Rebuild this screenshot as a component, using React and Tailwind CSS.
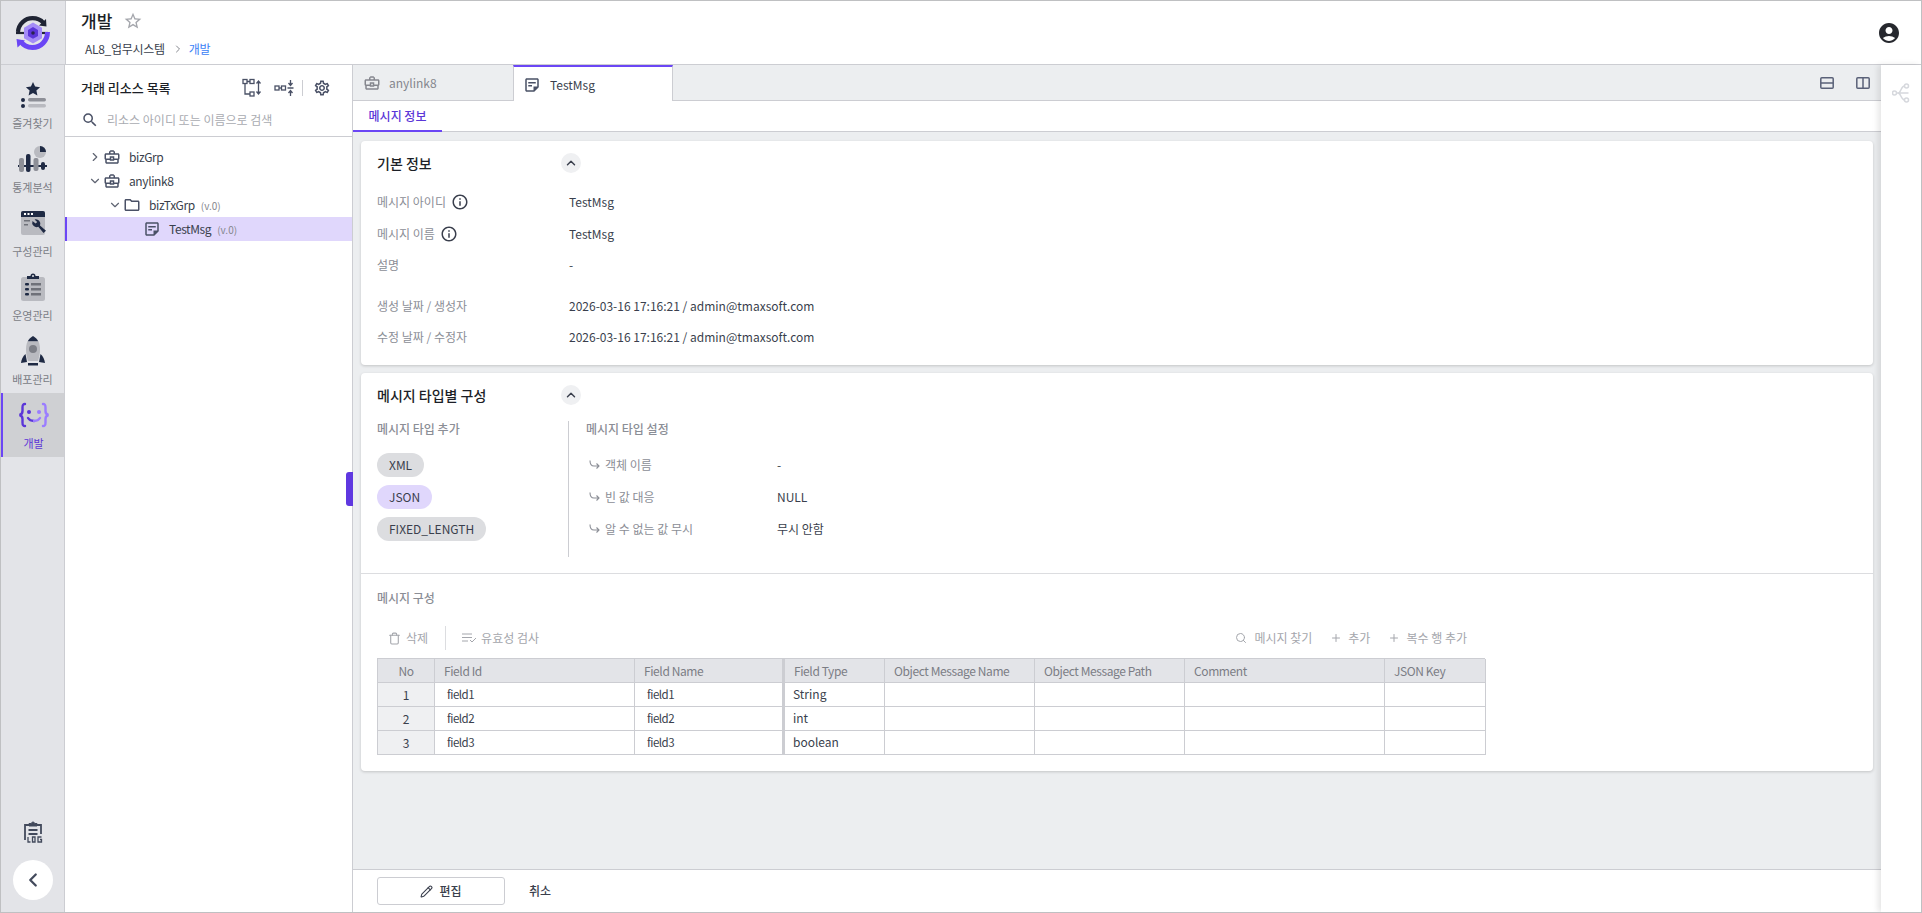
import React from 'react';
import { ChevronLeft, ChevronRight, ChevronDown, ChevronUp, Search, Plus, Trash, Pencil } from 'lucide-react';
import {
  MdAccountCircle, MdInfoOutline, MdOutlineBusinessCenter, MdOutlineFolder,
  MdOutlineSettings, MdOutlineStickyNote2, MdSearch, MdStarBorder,
} from 'react-icons/md';

const FavIcon = () => (
  <svg width="32" height="32" viewBox="0 0 32 32">
    <path d="M16 3l2.1 4.6 5 .6-3.7 3.4 1 5-4.400-2.500-4.400 2.500 1-5-3.700-3.400 5-.6z" fill="#1f2a44" />
    <circle cx="6" cy="21" r="2" fill="#1f2a44" />
    <circle cx="6" cy="27" r="2" fill="#1f2a44" />
    <rect x="11" y="19" width="18" height="3.500" rx="1.700" fill="#8d8f97" />
    <rect x="11" y="25" width="18" height="3.500" rx="1.700" fill="#b9bac0" />
  </svg>
);

const StatsIcon = () => (
  <svg width="32" height="32" viewBox="0 0 32 32">
    <rect x="1" y="22" width="29" height="2" fill="#1f2a44" />
    <rect x="2" y="15" width="5" height="14" rx="2" fill="#8d8f97" />
    <rect x="9" y="11" width="4.500" height="18" rx="2" fill="#1f2a44" />
    <rect x="16.500" y="15" width="5" height="13" rx="2" fill="#8d8f97" />
    <rect x="24" y="19" width="4" height="8" rx="2" fill="#1f2a44" />
    <circle cx="23" cy="9" r="6" fill="#b9bac0" />
    <path d="M23 9V3a6 6 0 0 1 6 6z" fill="#1f2a44" />
  </svg>
);

const ConfigIcon = () => (
  <svg width="32" height="32" viewBox="0 0 32 32">
    <rect x="4" y="4" width="24" height="24" rx="2" fill="#b9bac0" />
    <path d="M4 10V6a2 2 0 0 1 2-2h20a2 2 0 0 1 2 2v4z" fill="#1f2a44" />
    <rect x="7" y="6" width="2" height="2" fill="#fff" />
    <rect x="10.500" y="6" width="2" height="2" fill="#fff" />
    <rect x="14" y="6" width="2" height="2" fill="#fff" />
    <rect x="7" y="13" width="6" height="1.500" fill="#6f7179" />
    <rect x="7" y="17" width="4" height="1.500" fill="#6f7179" />
    <path d="M15.500 14a4.500 4.500 0 0 0 5.800 5.800l5.200 6.200 2.500-2.300-6-5.300a4.500 4.500 0 0 0-5.400-6l2.600 2.600-1.600 1.600z" fill="#1f2a44" />
  </svg>
);

const OpsIcon = () => (
  <svg width="32" height="32" viewBox="0 0 32 32">
    <rect x="4" y="6" width="24" height="24" rx="2.500" fill="#b9bac0" />
    <path d="M10 8V5h3.500a2.500 2.500 0 0 1 5 0H22v3z" fill="#1f2a44" />
    <circle cx="16" cy="5" r="1" fill="#e3e4e8" />
    <rect x="8" y="12" width="4" height="2.500" rx="1" fill="#1f2a44" />
    <rect x="8" y="17" width="4" height="2.500" rx="1" fill="#1f2a44" />
    <rect x="8" y="22" width="4" height="2.500" rx="1" fill="#1f2a44" />
    <rect x="14" y="12" width="10" height="2.500" fill="#6f7179" />
    <rect x="14" y="17" width="10" height="2.500" fill="#6f7179" />
    <rect x="14" y="22" width="10" height="2.500" fill="#6f7179" />
  </svg>
);

const DeployIcon = () => (
  <svg width="32" height="32" viewBox="0 0 32 32">
    <path d="M16 1c2.500 1.500 4.500 3.200 5.300 5.500H10.700C11.500 4.200 13.500 2.500 16 1z" fill="#1f2a44" />
    <path d="M10.500 6.500h11c1 2 1.500 5 1.500 8 0 4-.8 8-2 11.500H11c-1.200-3.500-2-7.500-2-11.500 0-3 .5-6 1.500-8z" fill="#b9bac0" />
    <circle cx="16" cy="14" r="4" fill="#7d7f87" />
    <path d="M8.500 19l1.500 8-6 1c.3-3.500 2-7 4.500-9zM23.500 19l-1.500 8 6 1c-.3-3.500-2-7-4.500-9z" fill="#1f2a44" />
    <rect x="11" y="28" width="10" height="2.500" fill="#1f2a44" />
  </svg>
);

const DevIcon = () => (
  <svg width="32" height="32" viewBox="0 0 32 32" fill="none" strokeWidth="2.400" strokeLinecap="round">
    <path d="M7 5c-2.500 0-2.500 1.500-2.500 3.500v3.500c0 2-1 3.500-3 4 2 .5 3 2 3 4v3.500c0 2 0 3.500 2.500 3.500" stroke="#5b36d8" />
    <path d="M25 5c2.500 0 2.500 1.500 2.500 3.500v3.500c0 2 1 3.500 3 4-2 .5-3 2-3 4v3.500c0 2 0 3.500-2.500 3.500" stroke="#9b7dff" />
    <circle cx="11" cy="13" r="2" fill="#5b36d8" stroke="none" />
    <circle cx="21" cy="13" r="2" fill="#9b7dff" stroke="none" />
    <path d="M10 19c1.500 2.500 3.500 3 6 3" stroke="#5b36d8" />
    <path d="M16 22c2.500 0 4.500-.5 6-3" stroke="#9b7dff" />
  </svg>
);

const navItems = [
  { label: '즐겨찾기', Icon: FavIcon },
  { label: '통계분석', Icon: StatsIcon },
  { label: '구성관리', Icon: ConfigIcon },
  { label: '운영관리', Icon: OpsIcon },
  { label: '배포관리', Icon: DeployIcon },
  { label: '개발', Icon: DevIcon, active: true },
];

const Logo = () => (
  <svg width="36" height="36" viewBox="0 0 36 36" fill="none">
    <path d="M3 17C3.500 9 10 3.200 17.500 3.200c4.500 0 8.500 1.800 11 4.800" stroke="#1f2433" strokeWidth="4.200" />
    <path d="M24 10.500l7.500 1-.5-7.500z" fill="#1f2433" />
    <path d="M1 18h32" stroke="#1f2433" strokeWidth="2.200" />
    <path d="M32.500 17c0 8.500-6.500 15.500-15 15.500-5 0-9.500-2.500-12-6.500" stroke="#6b46f5" strokeWidth="5" />
    <path d="M10 25.500l-8.500-1.500 1 8.500z" fill="#6b46f5" />
    <path d="M18 7.500l9 5.200v10.500l-9 5.200-9-5.200V12.700z" fill="#a48cf7" />
    <path d="M18 12l5 2.900v6l-5 2.900-5-2.900v-6z" fill="#5b36d8" />
    <circle cx="18" cy="18" r="1.800" fill="#2a2350" />
  </svg>
);

const LogIcon = () => (
  <svg width="20" height="24" viewBox="0 0 20 24" fill="none" stroke="#434a5c" strokeWidth="1.800">
    <path d="M2 20V5h4M14 5h4v9" />
    <path d="M6 6V3.500h2.500a1.500 1.500 0 0 1 3 0H14V6z" fill="#434a5c" strokeWidth="1" />
    <path d="M5.500 10h9M5.500 14h9" />
    <path d="M5 17v5h2.500M9.500 17h2.500v5H9.500zM18.500 17H15v5h3.500v-2.500H17" strokeWidth="1.300" />
  </svg>
);

const TreeExpandIcon = () => (
  <svg width="20" height="20" viewBox="0 0 20 20" fill="none" stroke="#4a5166" strokeWidth="1.300">
    <rect x="1" y="1.500" width="4" height="4" />
    <rect x="8" y="1.500" width="4" height="4" />
    <rect x="8" y="14" width="4" height="4" />
    <path d="M3 5.500V16h5M5 3.500h3" />
    <path d="M16.500 3v13M14.500 5.500l2-2.500 2 2.500M14.500 13.500l2 2.500 2-2.500" />
  </svg>
);

const TreeCollapseIcon = () => (
  <svg width="20" height="20" viewBox="0 0 20 20" fill="none" stroke="#4a5166" strokeWidth="1.300">
    <rect x="1" y="8" width="4" height="4" />
    <rect x="7.500" y="8" width="4" height="4" />
    <path d="M5 10h2.500" />
    <path d="M16.500 2v5M14.500 5l2 2.500 2-2.500M16.500 18v-5M14.500 15l2-2.500 2 2.500M13.500 10h6" />
  </svg>
);

const SplitHIcon = () => (
  <svg width="14" height="12" viewBox="0 0 14 12" fill="none" stroke="#5a6178" strokeWidth="1.500">
    <rect x=".8" y=".8" width="12.400" height="10.400" rx="1" />
    <path d="M1 6h12" />
  </svg>
);

const SplitVIcon = () => (
  <svg width="14" height="12" viewBox="0 0 14 12" fill="none" stroke="#5a6178" strokeWidth="1.500">
    <rect x=".8" y=".8" width="12.400" height="10.400" rx="1" />
    <path d="M7 1v10" />
  </svg>
);

const FlowIcon = () => (
  <svg width="18" height="20" viewBox="0 0 18 20" fill="none" stroke="#d6d8dd" strokeWidth="1.500">
    <circle cx="2.500" cy="10" r="2" />
    <circle cx="14.500" cy="3" r="2" />
    <circle cx="14.500" cy="17" r="2" />
    <path d="M4.500 10h12M6 10c3 0 3-7 6.500-7M6 10c3 0 3 7 6.500 7" />
  </svg>
);

const ArrowSub = () => (
  <svg width="11" height="10" viewBox="0 0 11 10" fill="none" stroke="#8b8e96" strokeWidth="1.100">
    <path d="M1 .5c0 3.500 1 5.500 4 5.500h5M7.500 3.500L10 6 7.500 8.500" />
  </svg>
);

const ValidateIcon = () => (
  <svg width="14" height="10" viewBox="0 0 14 10" fill="none" stroke="#a4a6ac" strokeWidth="1">
    <path d="M0 1h10M0 4.500h10M0 8h6M8 7l2 2 4-4" />
  </svg>
);

const SideNav = () => (
  <aside className="w-[64px] shrink-0 flex flex-col bg-[#e3e4e8] border-r border-[#cccdd2] pt-[8px]">
    {navItems.map(({ label, Icon, active }) => (
      <div
        key={label}
        className={`h-[64px] flex flex-col items-center pt-[6px] ${active ? 'bg-[#cfd0d3] border-l-2 border-[#6b46f5]' : ''}`}
      >
        <Icon />
        <span className={`mt-[3px] text-[11px] leading-[18px] ${active ? 'text-[#5b36d8]' : 'text-[#7b7d85]'}`}>{label}</span>
      </div>
    ))}
    <div className="mt-auto flex flex-col items-center pb-[12px]">
      <LogIcon />
      <div className="mt-[16px] w-[40px] h-[40px] rounded-full bg-white flex items-center justify-center">
        <ChevronLeft size={22} color="#434a5c" strokeWidth={2.500} />
      </div>
    </div>
  </aside>
);

const treeRows = [
  { name: 'bizGrp', pad: 'pl-[23px]', Toggle: ChevronRight, Icon: MdOutlineBusinessCenter },
  { name: 'anylink8', pad: 'pl-[23px]', Toggle: ChevronDown, Icon: MdOutlineBusinessCenter },
  { name: 'bizTxGrp', pad: 'pl-[43px]', Toggle: ChevronDown, Icon: MdOutlineFolder, version: '(v.0)' },
  { name: 'TestMsg', pad: 'pl-[76px]', Icon: MdOutlineStickyNote2, version: '(v.0)', selected: true },
];

const TreePanel = () => (
  <section className="relative w-[288px] shrink-0 flex flex-col bg-white border-r border-[#cccdd2]">
    <div className="h-[72px] shrink-0 border-b border-[#cccdd2] pl-[16px] pr-[21px]">
      <div className="h-[46px] flex items-center">
        <span className="text-[13px] font-medium text-[#1c1f27]">거래 리소스 목록</span>
        <div className="ml-auto flex items-center">
          <TreeExpandIcon />
          <span className="ml-[12px]"><TreeCollapseIcon /></span>
          <span className="ml-[8px] mr-[10px] w-px h-[16px] bg-[#cccdd2]" />
          <MdOutlineSettings size={18} color="#4a5166" />
        </div>
      </div>
      <div className="flex items-center">
        <MdSearch size={18} color="#4a5166" />
        <span className="ml-[8px] text-[12px] text-[#a9abb1]">리소스 아이디 또는 이름으로 검색</span>
      </div>
    </div>
    <div className="pt-[8px]">
      {treeRows.map(({ name, pad, Toggle, Icon, version, selected }) => (
        <div
          key={name}
          className={`h-[24px] flex items-center text-[12px] text-[#3a3f4d] ${pad} ${selected ? 'bg-[#e0d7fc] border-l-2 border-[#6b46f5]' : ''}`}
        >
          {Toggle && <Toggle size={14} color="#5f6472" className="mr-[1px]" />}
          <Icon size={18} color="#4a5166" />
          <span className="ml-[8px] tracking-[-0.4px]">{name}</span>
          {version && <span className="ml-[6px] text-[10px] text-[#85878e]">{version}</span>}
        </div>
      ))}
    </div>
    <div className="absolute right-[-1px] top-[407px] w-[7px] h-[34px] rounded-l-[3px] bg-[#5f38e0]" />
  </section>
);

const CollapseButton = () => (
  <div className="absolute left-[184px] top-1/2 -translate-y-1/2 w-[20px] h-[20px] rounded-full bg-[#eff0f2] flex items-center justify-center">
    <ChevronUp size={14} color="#3a3f4d" strokeWidth={2.500} />
  </div>
);

const CardTitle = ({ children }) => (
  <div className="relative h-[20px] flex items-center text-[14px] font-medium text-[#1c1f27]">
    {children}
    <CollapseButton />
  </div>
);

const basicInfo = [
  { label: '메시지 아이디', value: 'TestMsg', info: true, mt: 'mt-[19px]' },
  { label: '메시지 이름', value: 'TestMsg', info: true, mt: 'mt-[12px]' },
  { label: '설명', value: '-', mt: 'mt-[11px]' },
  { label: '생성 날짜 / 생성자', value: '2026-03-16 17:16:21 / admin@tmaxsoft.com', mt: 'mt-[21px]' },
  { label: '수정 날짜 / 수정자', value: '2026-03-16 17:16:21 / admin@tmaxsoft.com', mt: 'mt-[11px]' },
];

const BasicInfoCard = () => (
  <div className="h-[224px] shrink-0 bg-white rounded-[4px] shadow-[0_1px_3px_rgba(0,0,0,0.18)] px-[16px] pt-[12px]">
    <CardTitle>기본 정보</CardTitle>
    {basicInfo.map(({ label, value, info, mt }) => (
      <div key={label} className={`h-[20px] flex items-center text-[12px] ${mt}`}>
        <span className="w-[192px] flex items-center text-[#8b8e96]">
          {label}
          {info && <MdInfoOutline size={18} color="#3a3f4d" className="ml-[5px]" />}
        </span>
        <span className="text-[#3a3f4d]">{value}</span>
      </div>
    ))}
  </div>
);

const typePills = [
  { label: 'XML', color: 'bg-[#dcdde0]' },
  { label: 'JSON', color: 'bg-[#e0d7fc]' },
  { label: 'FIXED_LENGTH', color: 'bg-[#dcdde0]' },
];

const typeSettings = [
  { label: '객체 이름', value: '-' },
  { label: '빈 값 대응', value: 'NULL' },
  { label: '알 수 없는 값 무시', value: '무시 안함' },
];

const columns = ['No', 'Field Id', 'Field Name', 'Field Type', 'Object Message Name', 'Object Message Path', 'Comment', 'JSON Key'];
const rows = [
  { no: 1, id: 'field1', name: 'field1', type: 'String' },
  { no: 2, id: 'field2', name: 'field2', type: 'int' },
  { no: 3, id: 'field3', name: 'field3', type: 'boolean' },
];
const gridCols = 'grid grid-cols-[57px_200px_150px_100px_150px_150px_200px_101px]';
const cell = 'h-[24px] flex items-center border-r border-b border-[#cccdd2]';
const fieldText = 'pl-[12px] text-[11.5px] tracking-[-0.5px] [font-variant-ligatures:common-ligatures]';

const MessageTable = () => (
  <div className="w-[1108px] border-l border-t border-[#cccdd2] text-[12px]">
    <div className={`${gridCols} bg-[#e3e4e8] text-[#7b7d85] tracking-[-0.4px]`}>
      {columns.map((col, i) => (
        <div
          key={col}
          className={`${cell} ${i === 0 ? 'justify-center' : 'pl-[9px]'} ${i === 2 ? 'border-r-[3px]' : ''}`}
        >
          {col}
        </div>
      ))}
    </div>
    {rows.map((row) => (
      <div key={row.no} className={`${gridCols} text-[#3a3f4d]`}>
        <div className={`${cell} justify-center bg-[#eff0f2]`}>{row.no}</div>
        <div className={`${cell} ${fieldText}`}>{row.id}</div>
        <div className={`${cell} ${fieldText} border-r-[3px]`}>{row.name}</div>
        <div className={`${cell} pl-[8px] pb-[2px]`}>{row.type}</div>
        <div className={cell} />
        <div className={cell} />
        <div className={cell} />
        <div className={cell} />
      </div>
    ))}
  </div>
);

const MessageTypeCard = () => (
  <div className="mt-[8px] h-[398px] shrink-0 bg-white rounded-[4px] shadow-[0_1px_3px_rgba(0,0,0,0.18)] pt-[12px]">
    <div className="px-[16px]">
      <CardTitle>메시지 타입별 구성</CardTitle>
    </div>
    <div className="flex px-[16px] mt-[16px] h-[152px]">
      <div className="w-[192px] h-[136px] border-r border-[#cccdd2]">
        <div className="h-[16px] flex items-center font-medium text-[12px] text-[#8b8e96]">메시지 타입 추가</div>
        <div className="mt-[16px] flex flex-col items-start gap-[8px]">
          {typePills.map(({ label, color }) => (
            <span key={label} className={`h-[24px] px-[12px] rounded-full flex items-center text-[12px] text-[#3a3f4d] ${color}`}>{label}</span>
          ))}
        </div>
      </div>
      <div className="pl-[17px]">
        <div className="h-[16px] flex items-center font-medium text-[12px] text-[#8b8e96]">메시지 타입 설정</div>
        <div className="mt-[16px] flex flex-col gap-[8px]">
          {typeSettings.map(({ label, value }) => (
            <div key={label} className="h-[24px] flex items-center text-[12px]">
              <span className="ml-[3px] w-[16px]"><ArrowSub /></span>
              <span className="w-[172px] text-[#8b8e96]">{label}</span>
              <span className="text-[#3a3f4d]">{value}</span>
            </div>
          ))}
        </div>
      </div>
    </div>
    <div className="border-t border-[#dcdde0] px-[16px]">
      <div className="mt-[15px] h-[18px] flex items-center text-[12px] font-medium text-[#8b8e96]">메시지 구성</div>
      <div className="mt-[19px] w-[1108px] h-[24px] flex items-center text-[12px] text-[#a4a6ac]">
        <Trash size={13} color="#a4a6ac" className="ml-[11px]" />
        <span className="ml-[5px]">삭제</span>
        <span className="ml-[17px] w-px h-[24px] bg-[#dcdde0]" />
        <span className="ml-[16px]"><ValidateIcon /></span>
        <span className="ml-[5px]">유효성 검사</span>
        <Search size={12} color="#a4a6ac" className="ml-auto" />
        <span className="ml-[7px]">메시지 찾기</span>
        <Plus size={12} color="#a4a6ac" className="ml-[18px]" />
        <span className="ml-[6px]">추가</span>
        <Plus size={12} color="#a4a6ac" className="ml-[18px]" />
        <span className="ml-[6px] mr-[18px]">복수 행 추가</span>
      </div>
      <div className="mt-[8px]">
        <MessageTable />
      </div>
    </div>
  </div>
);

const MainPanel = () => (
  <main className="flex-1 min-w-0 flex flex-col bg-[#eceef0]">
    <div className="h-[36px] shrink-0 flex border-b border-[#cccdd2] text-[12px]">
      <div className="w-[160px] flex items-center pl-[10px] pt-[1px] text-[#85878e]">
        <MdOutlineBusinessCenter size={18} color="#85878e" />
        <span className="ml-[8px]">anylink8</span>
      </div>
      <div className="w-[160px] h-[36px] flex items-center pl-[9px] pt-[1px] bg-white border-t-2 border-x border-x-[#cccdd2] border-t-[#6b46f5] text-[#3a3f4d]">
        <MdOutlineStickyNote2 size={18} color="#4a5166" />
        <span className="ml-[9px]">TestMsg</span>
      </div>
      <div className="ml-auto flex items-center gap-[22px] pr-[11px]">
        <SplitHIcon />
        <SplitVIcon />
      </div>
    </div>
    <div className="h-[31px] shrink-0 bg-white border-b border-[#cccdd2]">
      <div className="w-[89px] h-[31px] flex items-center justify-center border-b-2 border-[#6b46f5] text-[12px] font-medium text-[#5b36d8]">메시지 정보</div>
    </div>
    <div className="flex-1 min-h-0 flex flex-col pt-[9px] px-[8px]">
      <BasicInfoCard />
      <MessageTypeCard />
    </div>
    <div className="h-[43px] shrink-0 bg-white border-t border-[#cccdd2] flex items-center pl-[24px]">
      <button className="w-[128px] h-[28px] flex items-center justify-center gap-[6px] rounded-[3px] border border-[#cccdd2] text-[12px] font-medium text-[#3a3f4d]">
        <Pencil size={13} color="#3a3f4d" />
        편집
      </button>
      <span className="ml-[24px] text-[12px] font-medium text-[#3a3f4d]">취소</span>
    </div>
  </main>
);

const App = () => (
  <div className="w-screen h-screen overflow-hidden flex flex-col bg-white border border-[#bfc0c2] font-['Noto_Sans_CJK_KR','Noto_Sans',sans-serif]">
    <header className="h-[64px] shrink-0 flex border-b border-[#cccdd2]">
      <div className="w-[65px] shrink-0 flex items-center justify-center bg-[#e3e4e8] border-r border-[#cccdd2]">
        <Logo />
      </div>
      <div className="pl-[15px] pt-[6px]">
        <div className="flex items-center h-[28px]">
          <span className="text-[17px] font-medium text-[#1c1f27]">개발</span>
          <MdStarBorder size={20} color="#a4a6ac" className="ml-[11px]" />
        </div>
        <div className="mt-[5px] flex items-center text-[12px] pl-[4px]">
          <span className="text-[#3a3f4d] tracking-[-0.3px]">AL8_업무시스템</span>
          <ChevronRight size={12} color="#85878e" className="ml-[7px]" />
          <span className="ml-[5px] text-[#3b82f6] tracking-[-0.3px]">개발</span>
        </div>
      </div>
      <div className="ml-auto pr-[20px] flex items-center">
        <MdAccountCircle size={24} color="#26282e" />
      </div>
    </header>
    <div className="flex-1 min-h-0 flex">
      <SideNav />
      <TreePanel />
      <MainPanel />
      <div className="w-[40px] shrink-0 bg-white shadow-[-3px_0_6px_rgba(0,0,0,0.1)] flex justify-center pt-[18px]">
        <FlowIcon />
      </div>
    </div>
  </div>
);

export default App;
